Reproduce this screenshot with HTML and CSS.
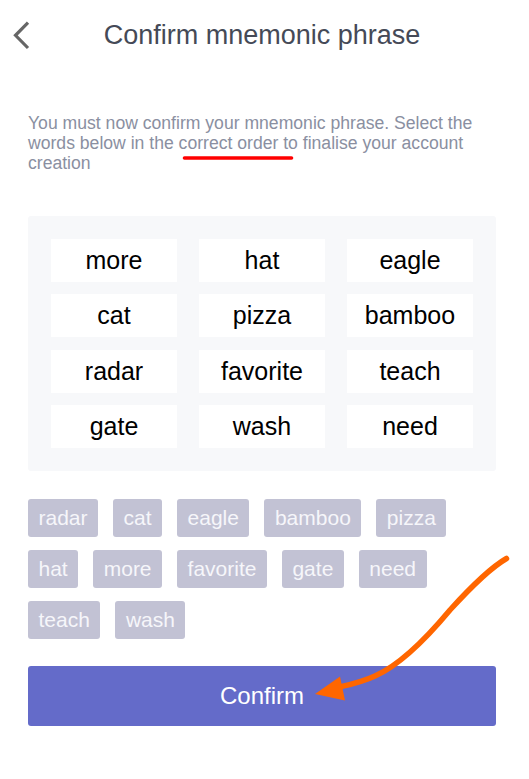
FILE: index.html
```html
<!DOCTYPE html>
<html lang="en">
<head>
    <meta charset="UTF-8">
    <meta name="viewport" content="width=device-width, initial-scale=1.0">
    <title>Confirm mnemonic phrase</title>
    <link rel="stylesheet" href="styles.css">
</head>
<body>
    <div class="page">
        <div class="header">
            <div class="back">
                <svg width="19" height="31" viewBox="0 0 19 31">
                    <polyline points="16,2.7 3.5,15.3 16,28" fill="none" stroke="#666" stroke-width="3.2"/>
                </svg>
            </div>
            <h1 class="title">Confirm mnemonic phrase</h1>
        </div>

        <div class="content">
            <p class="desc">You must now confirm your mnemonic phrase. Select the words below in the correct order to finalise your account creation</p>

            <div class="board">
                <div class="cell">more</div>
                <div class="cell">hat</div>
                <div class="cell">eagle</div>
                <div class="cell">cat</div>
                <div class="cell">pizza</div>
                <div class="cell">bamboo</div>
                <div class="cell">radar</div>
                <div class="cell">favorite</div>
                <div class="cell">teach</div>
                <div class="cell">gate</div>
                <div class="cell">wash</div>
                <div class="cell">need</div>
            </div>

            <div class="chips">
                <div class="chip">radar</div>
                <div class="chip">cat</div>
                <div class="chip">eagle</div>
                <div class="chip">bamboo</div>
                <div class="chip">pizza</div>
                <div class="chip">hat</div>
                <div class="chip">more</div>
                <div class="chip">favorite</div>
                <div class="chip">gate</div>
                <div class="chip">need</div>
                <div class="chip">teach</div>
                <div class="chip">wash</div>
            </div>

            <div class="btn-confirm">Confirm</div>
        </div>

        <!-- annotations drawn over the screen -->
        <svg class="marks" width="529" height="779" viewBox="0 0 529 779">
            <line x1="184.5" y1="158" x2="291.5" y2="158" stroke="#ff0000" stroke-width="3.6" stroke-linecap="round"/>
            <path d="M506.5 558.5 C490 568, 470 588, 450 610 C425 640, 400 665, 375 676 C360 683, 348 685, 335 688" fill="none" stroke="#ff6600" stroke-width="5.5" stroke-linecap="round"/>
            <polygon points="315,694 340,676.5 345,700.5" fill="#ff6600"/>
        </svg>
    </div>
</body>
</html>
```

FILE: styles.css
```css
body {
    margin: 0;
    font-family: "Liberation Sans", Arial, sans-serif;
    background: #fff;
}

.page {
    position: relative;
    width: 529px;
    min-height: 779px;
}

.header {
    display: grid;
    grid-template-columns: 16px 1fr 33px;
    padding: 20px 0 0 12px;
}

.back {
    height: 31px;
    cursor: pointer;
}

.title {
    margin: 0;
    font-size: 27px;
    font-weight: normal;
    line-height: 31px;
    color: #454a57;
    text-align: center;
    white-space: nowrap;
}

.content {
    padding: 0 33px 0 28px;
}

.desc {
    margin: 62px 0 0;
    font-size: 17.6px;
    line-height: 20px;
    color: #8a8fa1;
}

.board {
    margin-top: 43px;
    padding: 23px;
    background: #f7f8fa;
    border-radius: 3px;
    display: grid;
    grid-template-columns: repeat(3, 1fr);
    gap: 12.3px 22px;
}

.cell {
    height: 43px;
    background: #fff;
    display: flex;
    justify-content: center;
    align-items: center;
    font-size: 25px;
    color: #000;
}

.chips {
    margin-top: 28px;
    display: flex;
    flex-wrap: wrap;
    gap: 13px 15px;
}

.chip {
    height: 38px;
    padding: 0 10.5px;
    display: flex;
    align-items: center;
    background: #c2c2d4;
    color: #f6f6fa;
    font-size: 21px;
    border-radius: 3px;
    cursor: pointer;
}

.btn-confirm {
    margin-top: 27px;
    height: 60px;
    display: flex;
    justify-content: center;
    align-items: center;
    background: #646bc9;
    color: #fff;
    font-size: 24px;
    border-radius: 3px;
    cursor: pointer;
}

.marks {
    position: absolute;
    top: 0;
    left: 0;
    pointer-events: none;
}
```
